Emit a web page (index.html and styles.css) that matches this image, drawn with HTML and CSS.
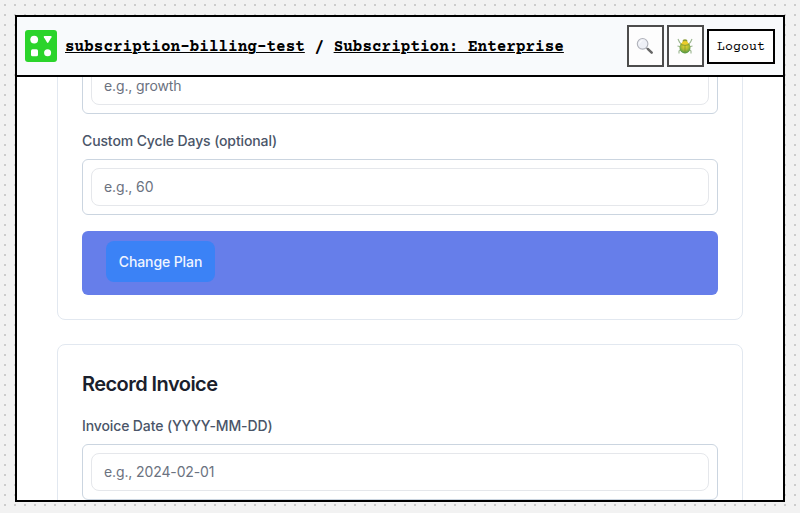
FILE: index.html
```html
<!DOCTYPE html>
<html lang="en">
<head>
<meta charset="utf-8">
<title>Subscription: Enterprise</title>
<link rel="stylesheet" href="styles.css">
</head>
<body>
<div class="window">
  <header class="topbar">
    <svg class="logo" viewBox="0 0 32 32" aria-hidden="true">
      <rect width="32" height="32" rx="3" fill="#2bd42b"/>
      <g fill="#fff"><circle cx="9.2" cy="9.6" r="3.9"/><path d="M19.6 6h6.2q1.3 0 .7 1.2l-3 5.1q-.8 1.2-1.6 0l-3-5.1Q18.300 6 19.600 6z"/><rect x="6" y="19.200" width="7" height="7" rx="1.500"/><circle cx="22.600" cy="22.700" r="3.500"/></g>
    </svg>
    <nav class="crumbs"><a href="#">subscription-billing-test</a> / <a href="#">Subscription: Enterprise</a></nav>
    <div class="actions">
      <button class="tool" aria-label="Search">
        <svg width="18" height="18" viewBox="0 0 18 18"><path d="M10.300 10.700l2 1.800" stroke="#777" stroke-width="1.300"/><path d="M12 12.200l3.700 3.500" stroke="#666" stroke-width="2.500" stroke-linecap="round"/><circle cx="6.600" cy="6.800" r="5.300" fill="#eef0f6" stroke="#b0b2ba" stroke-width="1.100"/><path d="M3.600 6.500q.3-2.500 2.800-3" fill="none" stroke="#fff" stroke-width="1"/></svg>
      </button>
      <button class="tool" aria-label="Debug">
        <svg width="18" height="18" viewBox="0 0 18 18"><defs><radialGradient id="shell" cx=".5" cy=".35" r=".6"><stop offset="0" stop-color="#efd72b"/><stop offset=".55" stop-color="#b0bc35"/><stop offset="1" stop-color="#569a48"/></radialGradient></defs><path d="M5.500 7L3.600 5.300 2 2M12.500 7l1.900-1.700L16 2M4.500 9.800L1.500 9M13.500 9.800l3-.8M5 12.500L3 14v2.500M13 12.500l2 1.500v2.500" fill="none" stroke="#9ab58e" stroke-width="1.100"/><ellipse cx="9" cy="4.100" rx="2.500" ry="1.900" fill="#8a9b35"/><ellipse cx="9" cy="10.700" rx="5.500" ry="5.800" fill="url(#shell)"/><path d="M5.500 7.200Q6 4.100 9 4.100t3.500 3.100q-3.500 1.500-7 0z" fill="#eccd2c"/><path d="M4.500 7.500q4.500 1.800 9 0M9 8.300v7.800" fill="none" stroke="#708f31" stroke-width=".7"/></svg>
      </button>
      <button class="logout">Logout</button>
    </div>
  </header>
  <main class="content">
    <section class="card card-plan">
      <div class="field"><input type="text" placeholder="e.g., growth"></div>
      <label class="label">Custom Cycle Days (optional)</label>
      <div class="field"><input type="text" placeholder="e.g., 60"></div>
      <div class="submit"><button>Change Plan</button></div>
    </section>
    <section class="card">
      <h2>Record Invoice</h2>
      <label class="label">Invoice Date (YYYY-MM-DD)</label>
      <div class="field"><input type="text" placeholder="e.g., 2024-02-01"></div>
    </section>
  </main>
</div>
</body>
</html>
```
FILE: styles.css
```css
* { box-sizing: border-box; }

body {
  margin: 0;
  height: 513px;
  padding: 15px 15px 11px;
  overflow: hidden;
  background-color: #f2f2f2;
  background-image: linear-gradient(90deg, transparent 2px, #f2f2f2 2px), linear-gradient(#ccc 2px, #f2f2f2 2px);
  background-position: 4px 4px;
  background-size: 10px 10px;
  font-family: Inter, "Liberation Sans", sans-serif;
  font-size: 14px;
}

button, input { font: inherit; margin: 0; }

.window {
  height: 487px;
  display: flex;
  flex-direction: column;
  border: 2px solid #000;
  background: #fff;
}

.topbar {
  flex: none;
  height: 60px;
  padding: 0 8px;
  display: flex;
  align-items: center;
  background: #f8fafc;
  border-bottom: 2px solid #000;
}

.logo { width: 32px; height: 32px; margin-right: 8px; }

.crumbs {
  flex: 1;
  padding-top: 2px;
  white-space: pre;
  font: bold 16px/20px "Courier Prime", Courier, "Liberation Mono", monospace;
  color: #000;
}

.crumbs a {
  color: inherit;
  text-decoration: underline;
  text-decoration-thickness: 1px;
}

.actions { display: flex; align-items: center; gap: 3px; }

.tool {
  width: 37px;
  height: 42px;
  padding: 0 1px 0 0;
  display: flex;
  align-items: center;
  justify-content: center;
  border: 2px solid #4c4c4c;
  background: #fdfdfd;
}

.logout {
  width: 68px;
  height: 35px;
  padding: 3px 0 0;
  border: 2px solid #000;
  background: #fff;
  color: #000;
  font: 13.333px "Courier Prime", Courier, "Liberation Mono", monospace;
}

.content { flex: 1; min-height: 0; padding: 0 40px; overflow: hidden; }

.card {
  margin-bottom: 24px;
  padding: 24px;
  border: 1px solid #e2e8f0;
  border-radius: 8px;
  background: #fff;
}

.card-plan { margin-top: -44px; }

h2 {
  margin: 0 0 16px;
  font-size: 20px;
  line-height: 30px;
  font-weight: 600;
  letter-spacing: -0.55px;
  color: #1a202c;
}

.label {
  display: block;
  margin-bottom: 8px;
  line-height: 21px;
  font-weight: 500;
  letter-spacing: -0.12px;
  color: #4a5568;
}

.field {
  height: 56px;
  margin-bottom: 16px;
  padding: 8px;
  border: 1px solid #cbd5e0;
  border-radius: 6px;
}

.field input {
  display: block;
  width: 100%;
  height: 38px;
  padding: 0 12px 2px;
  letter-spacing: -0.12px;
  border: 1px solid #e5e7eb;
  border-radius: 8px;
  background: #fff;
}

.field input::placeholder { color: #6b7280; opacity: 1; }

.submit {
  height: 64px;
  padding: 10px 24px;
  border-radius: 6px;
  background: #667eea;
}

.submit button {
  display: block;
  width: 109px;
  height: 41px;
  padding: 0;
  border: 0;
  border-radius: 8px;
  background: #3b82f6;
  color: #f0f4ff;
  font-weight: 500;
  letter-spacing: -0.1px;
}
```
